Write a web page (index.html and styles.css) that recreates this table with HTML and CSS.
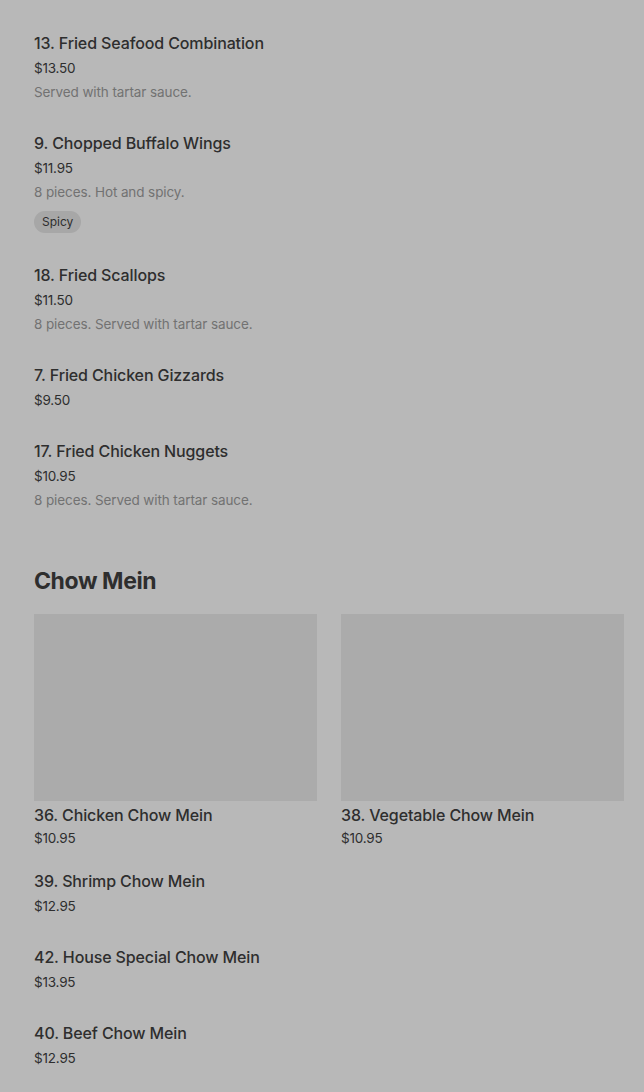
FILE: index.html
```html
<!DOCTYPE html>
<html>
<head>
<meta charset="utf-8">
<link rel="stylesheet" href="styles.css">
</head>
<body>
<main class="page">
  <section class="list">
    <div class="item">
      <div class="item-title">13. Fried Seafood Combination</div>
      <div class="item-price">$13.50</div>
      <div class="item-desc">Served with tartar sauce.</div>
    </div>
    <div class="item">
      <div class="item-title">9. Chopped Buffalo Wings</div>
      <div class="item-price">$11.95</div>
      <div class="item-desc">8 pieces. Hot and spicy.</div>
      <div class="tags"><span class="tag">Spicy</span></div>
    </div>
    <div class="item">
      <div class="item-title">18. Fried Scallops</div>
      <div class="item-price">$11.50</div>
      <div class="item-desc">8 pieces. Served with tartar sauce.</div>
    </div>
    <div class="item">
      <div class="item-title">7. Fried Chicken Gizzards</div>
      <div class="item-price">$9.50</div>
    </div>
    <div class="item">
      <div class="item-title">17. Fried Chicken Nuggets</div>
      <div class="item-price">$10.95</div>
      <div class="item-desc">8 pieces. Served with tartar sauce.</div>
    </div>
  </section>

  <h2 class="section-title">Chow Mein</h2>

  <section class="grid">
    <div class="card">
      <div class="card-img"></div>
      <div class="item-title">36. Chicken Chow Mein</div>
      <div class="card-price">$10.95</div>
    </div>
    <div class="card">
      <div class="card-img"></div>
      <div class="item-title">38. Vegetable Chow Mein</div>
      <div class="card-price">$10.95</div>
    </div>
  </section>

  <section class="list list-after">
    <div class="item">
      <div class="item-title">39. Shrimp Chow Mein</div>
      <div class="item-price">$12.95</div>
    </div>
    <div class="item">
      <div class="item-title">42. House Special Chow Mein</div>
      <div class="item-price">$13.95</div>
    </div>
    <div class="item">
      <div class="item-title">40. Beef Chow Mein</div>
      <div class="item-price">$12.95</div>
    </div>
  </section>
</main>
</body>
</html>
```

FILE: styles.css
```css
html, body {
  margin: 0;
  padding: 0;
  background: #b8b8b8;
}
body {
  font-family: Inter, "Noto Sans", "Liberation Sans", sans-serif;
  color: #2e2e2e;
  width: 644px;
  height: 1092px;
  overflow: hidden;
}
.page {
  padding: 31px 20px 0 34px;
}
.list {
  display: flex;
  flex-direction: column;
  gap: 28px;
}
.item {
  display: flex;
  flex-direction: column;
}
.item-title {
  font-size: 16px;
  font-weight: 500;
  line-height: 24px;
  letter-spacing: -0.12px;
  color: #2e2e2e;
}
.item-price {
  font-size: 13.5px;
  padding-top: 2px;
  line-height: 22px;
  color: #2e2e2e;
  letter-spacing: -0.2px;
}
.item-desc {
  font-size: 13.5px;
  padding-top: 2px;
  line-height: 22px;
  letter-spacing: -0.1px;
  color: #727272;
}
.tags {
  display: flex;
  margin: 8px 0 2px;
}
.tag {
  display: inline-block;
  background: #a7a7a7;
  border-radius: 11px;
  padding: 0 8px;
  height: 22px;
  line-height: 22px;
  font-size: 12px;
  color: #2e2e2e;
}
.section-title {
  margin: 54px 0 17px;
  font-size: 23px;
  font-weight: 700;
  line-height: 32px;
  letter-spacing: -0.4px;
  color: #2e2e2e;
}
.grid {
  display: grid;
  grid-template-columns: 283px 283px;
  column-gap: 24px;
}
.card {
  display: flex;
  flex-direction: column;
}
.card-img {
  height: 187px;
  background: #ababab;
  margin-bottom: 2px;
}
.card-price {
  font-size: 13.5px;
  line-height: 22px;
  letter-spacing: -0.2px;
  color: #2e2e2e;
}
.list-after {
  margin-top: 20px;
}
```
